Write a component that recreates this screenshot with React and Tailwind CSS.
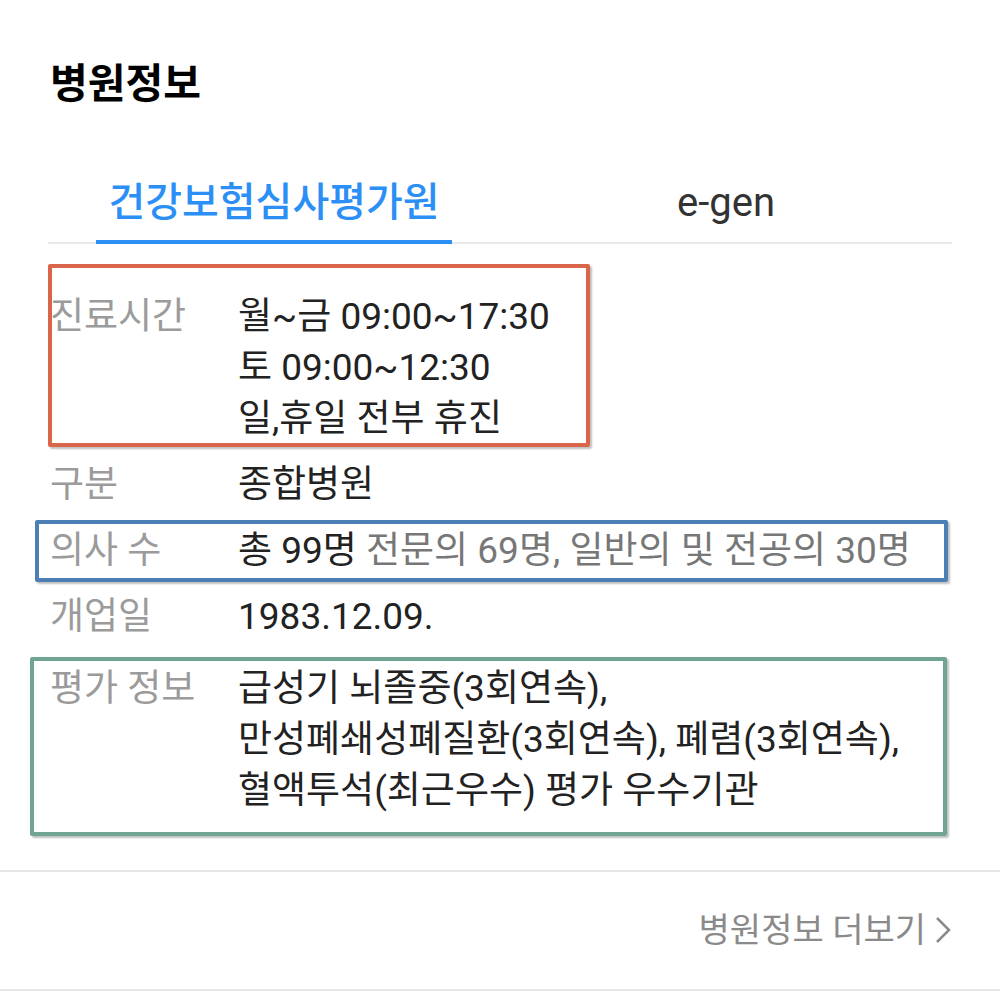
import React, { useState } from "react";

const font = { fontFamily: "Roboto, 'Noto Sans CJK KR', 'Noto Sans', sans-serif" };

function Row({ label, children, className = "" }) {
  return (
    <div className={`flex text-[37px] leading-[51px] ${className}`}>
      <div className="w-[188px] shrink-0 text-[#9b9b9b]">{label}</div>
      <div className="text-[#222]">{children}</div>
    </div>
  );
}

export default function App() {
  const [tab, setTab] = useState(0);
  const tabs = ["건강보험심사평가원", "e-gen"];

  return (
    <div className="relative w-[1000px] h-[991px] bg-white overflow-hidden" style={font}>
      <div className="px-[50px] pt-[57px]">
        <h2 className="text-[41px] leading-[54px] font-bold text-black">병원정보</h2>
      </div>

      {/* tabs */}
      <div className="mx-[48px] mt-[55px] flex border-b-2 border-[#e9e9e9]">
        {tabs.map((t, i) => (
          <button
            key={t}
            onClick={() => setTab(i)}
            className="flex-1 flex justify-center"
          >
            <span
              className={`h-[78px] w-[356px] flex items-center justify-center text-[40px] -mb-[2px] ${
                i === tab
                  ? "text-[#2b8ff5] font-medium border-b-4 border-[#2b8ff5]"
                  : "text-[#333] border-b-4 border-transparent"
              }`}
            >
              {t}
            </span>
          </button>
        ))}
      </div>

      {/* info rows */}
      <div className="relative px-[50px] pt-[47px]">
        <Row label="진료시간">
          <div>월~금 09:00~17:30</div>
          <div>토 09:00~12:30</div>
          <div>일,휴일 전부 휴진</div>
        </Row>
        <Row label="구분" className="mt-[15px]">종합병원</Row>
        <Row label="의사 수" className="mt-[15px]">
          총 99명 <span className="text-[#777]">전문의 69명, 일반의 및 전공의 30명</span>
        </Row>
        <Row label="개업일" className="mt-[15px]">1983.12.09.</Row>
        <Row label="평가 정보" className="mt-[21px]">
          <div>급성기 뇌졸중(3회연속),</div>
          <div>만성폐쇄성폐질환(3회연속), 폐렴(3회연속),</div>
          <div>혈액투석(최근우수) 평가 우수기관</div>
        </Row>
      </div>

      {/* annotation boxes */}
      <div className="absolute left-[48px] top-[264px] w-[542px] h-[183px] border-4 border-[#d9654a] rounded-[2px] shadow-[2px_2px_2px_rgba(0,0,0,0.25)] pointer-events-none" />
      <div className="absolute left-[35px] top-[520px] w-[913px] h-[62px] border-4 border-[#4b7fb6] rounded-[2px] shadow-[2px_2px_2px_rgba(0,0,0,0.25)] pointer-events-none" />
      <div className="absolute left-[30px] top-[657px] w-[917px] h-[179px] border-4 border-[#70a595] rounded-[2px] shadow-[2px_2px_2px_rgba(0,0,0,0.25)] pointer-events-none" />

      {/* footer link */}
      <div className="absolute left-0 right-0 top-[870px] border-t-2 border-[#e6e6e6]" />
      <div className="absolute left-0 right-0 top-[870px] h-[120px] flex items-center justify-end pr-[48px]">
        <span className="text-[34px] text-[#8a8a8a] flex items-center gap-[8px]">
          병원정보 더보기
          <svg width="18" height="30" viewBox="0 0 18 30" fill="none" stroke="#8a8a8a" strokeWidth="2.5">
            <path d="M3 3l12 12-12 12" />
          </svg>
        </span>
      </div>
      <div className="absolute left-0 right-0 top-[989px] border-t-2 border-[#e6e6e6]" />
    </div>
  );
}
